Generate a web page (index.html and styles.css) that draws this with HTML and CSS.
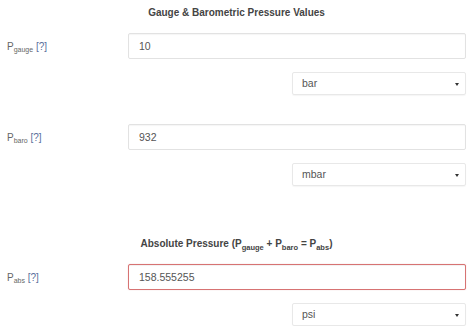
FILE: index.html
```html
<!doctype html>
<html lang="en">
<head>
	<meta charset="utf-8">
	<title>Pressure Values</title>
	<link rel="stylesheet" href="styles.css">
</head>
<body>
	<div id="frame">
		<h4 class="title">Gauge &amp; Barometric Pressure Values</h4>
		<div class="field">
			<label for="pgauge">P<sub>gauge</sub> <a href="#">[?]</a></label>
			<input id="pgauge" class="control" value="10">
		</div>
		<div class="unit">
			<div class="select">bar</div>
		</div>
		<div class="field second">
			<label for="pbaro">P<sub>baro</sub> <a href="#">[?]</a></label>
			<input id="pbaro" class="control" value="932">
		</div>
		<div class="unit">
			<div class="select">mbar</div>
		</div>
		<h4 class="title result">Absolute Pressure (P<sub>gauge</sub> + P<sub>baro</sub> = P<sub>abs</sub>)</h4>
		<div class="field">
			<label for="pabs">P<sub>abs</sub> <a href="#">[?]</a></label>
			<input id="pabs" class="control error" value="158.555255">
		</div>
		<div class="unit">
			<div class="select">psi</div>
		</div>
	</div>
</body>
</html>
```
FILE: styles.css
```css
html {
	box-sizing: border-box;
	font-size: 12px;
	font-family: "Liberation Sans", Arial, sans-serif;
}

*,
*:before,
*:after {
	box-sizing: inherit;
}

body,
h4 {
	margin: 0;
	padding: 0;
}

body {
	background: #fff;
	color: #555;
}

#frame {
	padding: 5px 8px 0 7px;
}

.title {
	text-align: center;
	font-size: 10px;
	font-weight: bold;
	color: #444;
	line-height: 16px;
	margin-bottom: 12px;
}

.title.result {
	margin-top: 50px;
	margin-bottom: 12px;
}

.title sub {
	font-size: 7.5px;
	vertical-align: -3px;
	line-height: 0;
}

.field {
	display: grid;
	grid-template-columns: 121px 1fr;
	align-items: center;
}

.field.second {
	margin-top: 29px;
}

.field label {
	font-size: 10px;
	color: #666;
}

.field label sub {
	font-size: 7px;
	vertical-align: -2px;
	line-height: 0;
}

.field label a {
	color: #5a6f9c;
	text-decoration: none;
}

.control {
	height: 26px;
	width: 100%;
	border: 1px solid #e2e2e2;
	border-radius: 2px;
	box-shadow: inset 0 1px 1px rgba(0, 0, 0, .04);
	padding: 0 10px;
	font: inherit;
	font-size: 10.5px;
	color: #555;
	background: #fff;
}

.control.error {
	border-color: #d77373;
	box-shadow: inset 0 1px 1px rgba(0, 0, 0, .06), 0 0 1px rgba(215, 115, 115, .5);
}

.unit {
	display: grid;
	grid-template-columns: 285px 1fr;
	margin-top: 13px;
}

.select {
	grid-column: 2;
	position: relative;
	height: 23px;
	line-height: 21px;
	border: 1px solid #e8e8e8;
	border-radius: 2px;
	box-shadow: 0 1px 1px rgba(0, 0, 0, .04);
	padding: 0 9px;
	font-size: 10.5px;
	color: #555;
}

.select:after {
	content: "";
	position: absolute;
	right: 6px;
	top: 10px;
	border-left: 2px solid transparent;
	border-right: 2px solid transparent;
	border-top: 3px solid #333;
}
```
